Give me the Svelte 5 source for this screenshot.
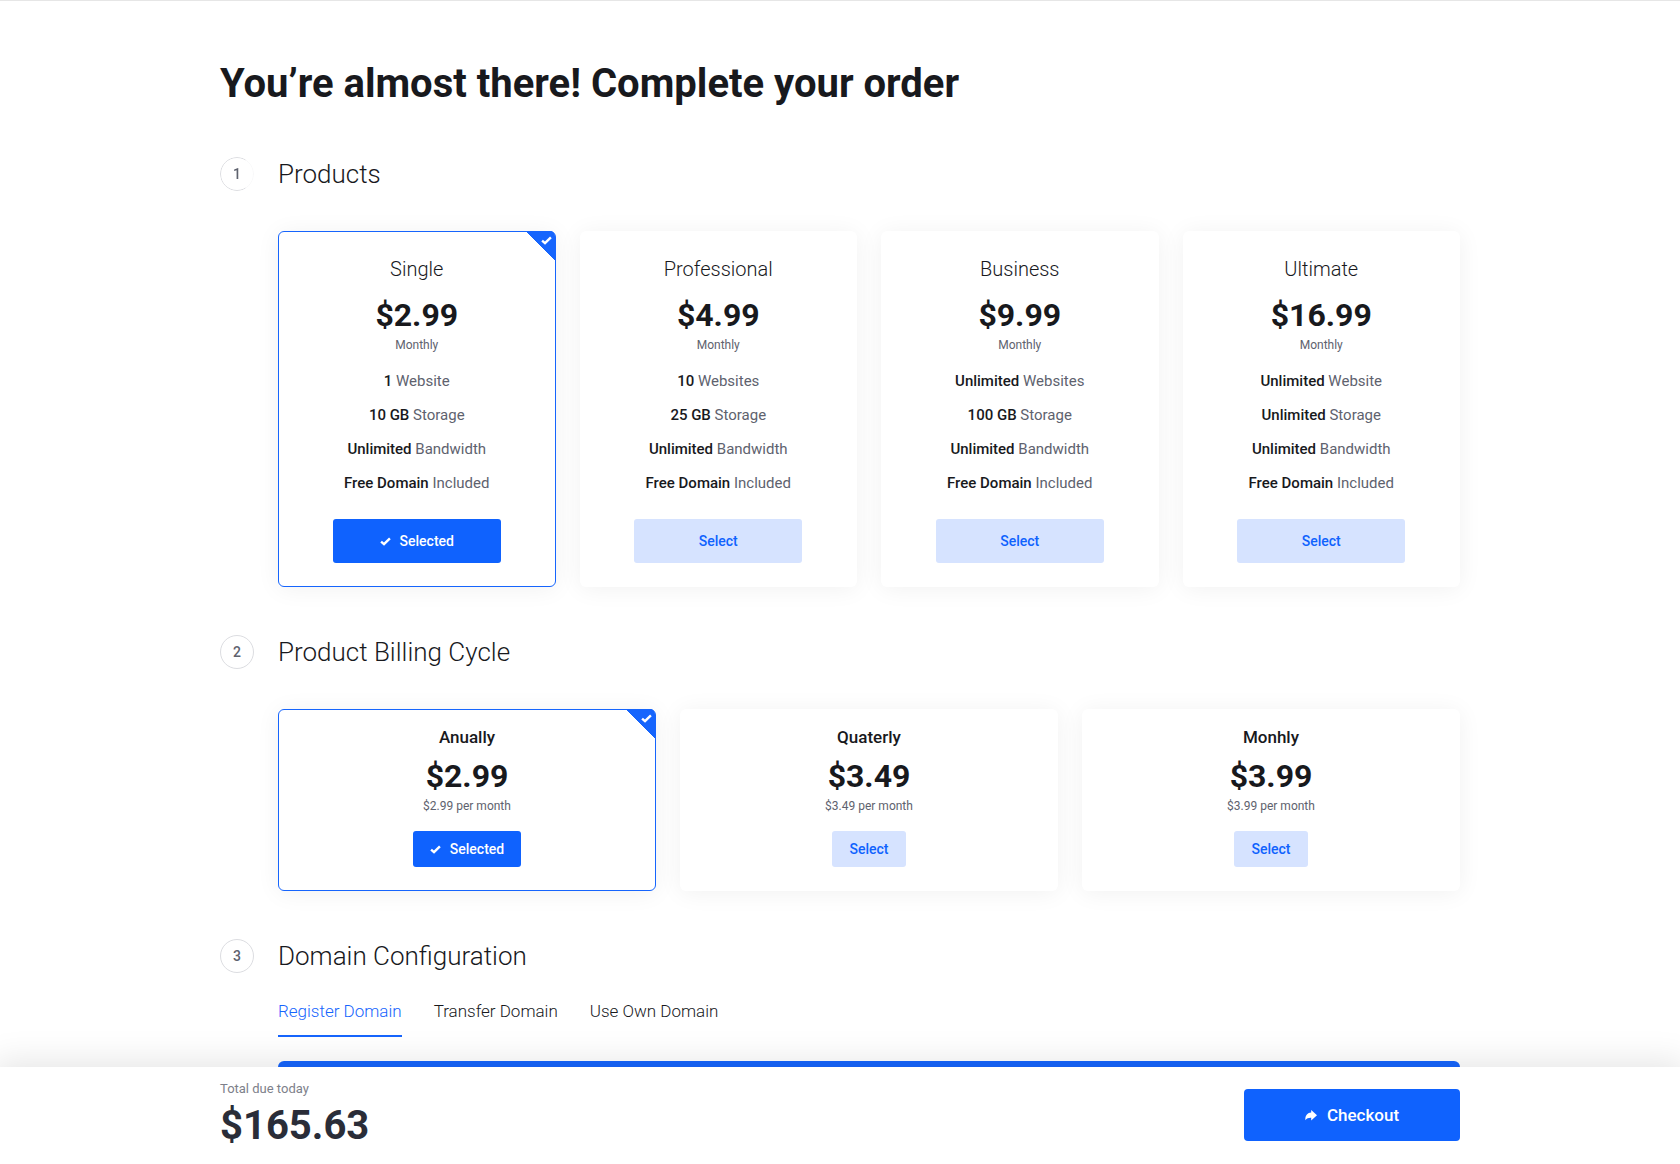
<script lang="ts">
	const products = [
		{
			name: 'Single',
			price: '$2.99',
			features: [
				['1', 'Website'],
				['10 GB', 'Storage'],
				['Unlimited', 'Bandwidth'],
				['Free Domain', 'Included']
			]
		},
		{
			name: 'Professional',
			price: '$4.99',
			features: [
				['10', 'Websites'],
				['25 GB', 'Storage'],
				['Unlimited', 'Bandwidth'],
				['Free Domain', 'Included']
			]
		},
		{
			name: 'Business',
			price: '$9.99',
			features: [
				['Unlimited', 'Websites'],
				['100 GB', 'Storage'],
				['Unlimited', 'Bandwidth'],
				['Free Domain', 'Included']
			]
		},
		{
			name: 'Ultimate',
			price: '$16.99',
			features: [
				['Unlimited', 'Website'],
				['Unlimited', 'Storage'],
				['Unlimited', 'Bandwidth'],
				['Free Domain', 'Included']
			]
		}
	];

	const cycles = [
		{ name: 'Anually', price: '$2.99' },
		{ name: 'Quaterly', price: '$3.49' },
		{ name: 'Monhly', price: '$3.99' }
	];

	const tabs = ['Register Domain', 'Transfer Domain', 'Use Own Domain'];

	let product = $state(0);
	let cycle = $state(0);
	let tab = $state(0);
</script>

{#snippet check()}
	<svg class="check" viewBox="0 0 11 9" aria-hidden="true">
		<path d="M1.1 4.6 4 7.2 9.9 1.3" />
	</svg>
{/snippet}

{#snippet selectButton(selected: boolean, onclick: () => void)}
	<button class="btn" class:active={selected} aria-pressed={selected} {onclick}>
		{#if selected}
			{@render check()}
			Selected
		{:else}
			Select
		{/if}
	</button>
{/snippet}

<div class="page">
	<main>
		<div class="container">
			<h1>You’re almost there! Complete your order</h1>

			<section>
				<span class="step fading">1</span>
				<h2>Products</h2>
				<div class="body products">
					{#each products as item, i}
						<article class="card" class:selected={product === i}>
							{#if product === i}
								<span class="corner">{@render check()}</span>
							{/if}
							<h3>{item.name}</h3>
							<p class="price">{item.price}</p>
							<p class="period">Monthly</p>
							<ul>
								{#each item.features as [amount, label]}
									<li><strong>{amount}</strong> {label}</li>
								{/each}
							</ul>
							{@render selectButton(product === i, () => (product = i))}
						</article>
					{/each}
				</div>
			</section>

			<section>
				<span class="step">2</span>
				<h2>Product Billing Cycle</h2>
				<div class="body cycles">
					{#each cycles as item, i}
						<article class="card" class:selected={cycle === i}>
							{#if cycle === i}
								<span class="corner">{@render check()}</span>
							{/if}
							<h3>{item.name}</h3>
							<p class="price">{item.price}</p>
							<p class="period">{item.price} per month</p>
							{@render selectButton(cycle === i, () => (cycle = i))}
						</article>
					{/each}
				</div>
			</section>

			<section>
				<span class="step">3</span>
				<h2>Domain Configuration</h2>
				<div class="body domain">
					<div class="tabs" role="tablist">
						{#each tabs as label, i}
							<button
								role="tab"
								class="tab"
								class:active={tab === i}
								aria-selected={tab === i}
								onclick={() => (tab = i)}>{label}</button
							>
						{/each}
					</div>
					<div class="panel"></div>
				</div>
			</section>
		</div>
	</main>

	<footer>
		<div class="container summary">
			<div>
				<p class="due">Total due today</p>
				<p class="total">$165.63</p>
			</div>
			<button class="checkout">
				<svg viewBox="0 0 12 11" aria-hidden="true">
					<path d="M6.2 0 12 5.3 6.2 10.6V7.8C3.6 7.7 1.8 8.3 0.4 10.2 -0.1 6 2.2 2.8 6.2 2.6Z" />
				</svg>
				Checkout
			</button>
		</div>
	</footer>
</div>

<style>
	:global(body) {
		margin: 0;
		background: #fff;
	}

	.page,
	.page button {
		font-family: Roboto, 'Liberation Sans', sans-serif;
	}

	.page {
		box-sizing: border-box;
		display: flex;
		flex-direction: column;
		height: 100vh;
		border-top: 1px solid #e6e6e6;
		color: #18191d;
	}

	h1,
	h2,
	h3,
	p,
	ul {
		margin: 0;
		padding: 0;
	}

	button {
		border: none;
		cursor: pointer;
	}

	main {
		flex: 1;
		min-height: 0;
		overflow-y: auto;
		scrollbar-width: none;
	}

	.container {
		box-sizing: border-box;
		max-width: 1288px;
		margin: 0 auto;
		padding: 0 24px;
	}

	h1 {
		padding-top: 58px;
		font-size: 40px;
		line-height: 50px;
		font-weight: 700;
	}

	section {
		display: grid;
		grid-template-columns: 34px 1fr;
		column-gap: 24px;
		align-items: center;
		margin-top: 48px;
	}

	.step {
		box-sizing: border-box;
		width: 34px;
		height: 34px;
		border: 1px solid #dcdde1;
		border-radius: 50%;
		font-size: 14px;
		line-height: 32px;
		font-weight: 500;
		text-align: center;
		color: #5e626e;
	}

	.step.fading {
		mask-image: linear-gradient(to right, #000 25px, rgba(0, 0, 0, 0.2) 26px);
	}

	h2 {
		font-size: 26px;
		line-height: 34px;
		font-weight: 300;
	}

	.body {
		grid-column: 2;
		margin-top: 40px;
	}

	.products,
	.cycles {
		display: grid;
		gap: 24px;
	}

	.products {
		grid-template-columns: repeat(4, 1fr);
	}

	.cycles {
		grid-template-columns: repeat(3, 1fr);
	}

	.card {
		position: relative;
		display: flex;
		flex-direction: column;
		align-items: center;
		padding: 23px;
		border: 1px solid transparent;
		border-radius: 6px;
		background: #fff;
		box-shadow: 0 2px 24px rgba(0, 0, 0, 0.06);
	}

	.card.selected {
		border-color: #1665fd;
	}

	.corner {
		position: absolute;
		top: -1px;
		right: 0;
		width: 29px;
		height: 29px;
		border-top-right-radius: 5px;
		background: linear-gradient(45deg, transparent 50%, #1665fd 50%);
	}

	.check {
		flex: none;
		width: 11px;
		height: 9px;
		fill: none;
		stroke: #fff;
		stroke-width: 2.4;
	}

	.corner .check {
		position: absolute;
		top: 5px;
		right: 3px;
	}

	h3 {
		font-size: 20px;
		line-height: 28px;
		font-weight: 300;
	}

	.cycles h3 {
		font-size: 17px;
		line-height: 24px;
		font-weight: 500;
	}

	.price {
		margin-top: 12px;
		font-size: 32px;
		line-height: 40px;
		font-weight: 700;
	}

	.period {
		margin-top: 2px;
		font-size: 12px;
		line-height: 16px;
		color: #5e626e;
	}

	ul {
		margin-top: 11px;
		list-style: none;
		text-align: center;
	}

	li {
		font-size: 15px;
		line-height: 34px;
		color: #5e626e;
	}

	strong {
		font-weight: 500;
		color: #18191d;
	}

	.btn {
		display: flex;
		align-items: center;
		justify-content: center;
		gap: 9px;
		height: 36px;
		margin-top: 17px;
		padding: 0 17px;
		border-radius: 3px;
		background: #d6e3ff;
		font-size: 14px;
		font-weight: 500;
		color: #0f62fe;
	}

	.btn.active {
		background: #0f62fe;
		color: #fff;
	}

	.products .btn {
		width: 168px;
		height: 44px;
		margin-top: 19px;
	}

	.cycles .card {
		padding-top: 15px;
	}

	.cycles .price {
		margin-top: 7px;
	}

	.domain {
		margin-top: 26px;
	}

	.tabs {
		display: flex;
		gap: 32px;
	}

	.tab {
		padding: 0 0 12px;
		border-bottom: 2px solid transparent;
		background: none;
		font-size: 17px;
		line-height: 24px;
		font-weight: 300;
		color: #18191d;
	}

	.tab.active {
		border-bottom-color: #1665fd;
		color: #1665fd;
	}

	.panel {
		height: 160px;
		margin-top: 24px;
		border-radius: 6px;
		background: #1665fd;
	}

	footer {
		position: relative;
		background: #fff;
		box-shadow: 0 0 32px 6px rgba(0, 0, 0, 0.1);
	}

	.summary {
		display: flex;
		align-items: center;
		justify-content: space-between;
		padding-top: 11px;
		padding-bottom: 12px;
	}

	.due {
		font-size: 13px;
		line-height: 22px;
		color: #7d808a;
	}

	.total {
		font-size: 40px;
		line-height: 52px;
		font-weight: 700;
		color: #2a2d38;
	}

	.checkout {
		display: flex;
		align-items: center;
		justify-content: center;
		gap: 10px;
		width: 216px;
		height: 52px;
		border-radius: 4px;
		background: #0f62fe;
		font-size: 17px;
		font-weight: 500;
		color: #fff;
	}

	.checkout svg {
		flex: none;
		width: 12px;
		height: 11px;
		fill: #fff;
	}
</style>
